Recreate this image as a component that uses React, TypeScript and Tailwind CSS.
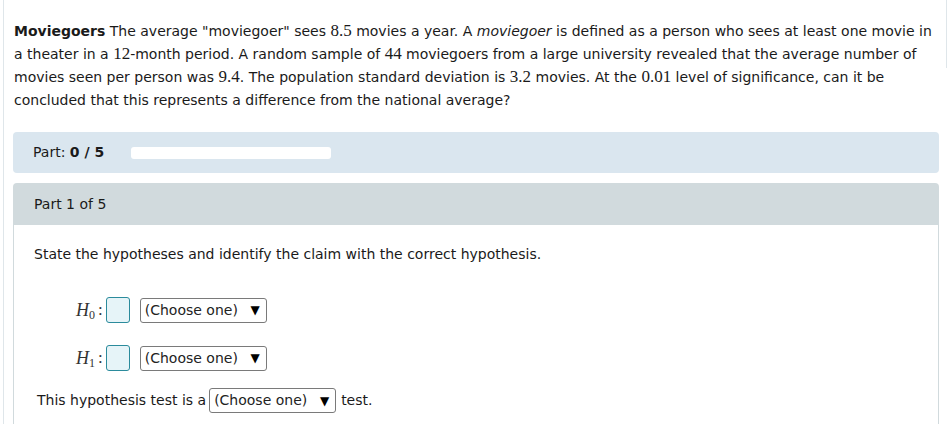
import React from "react";

const font = { fontFamily: "'DejaVu Sans', Verdana, sans-serif" };

function M({ children }: { children: React.ReactNode }) {
  return <span className="font-['Liberation_Serif',serif] text-[17px] leading-none">{children}</span>;
}

function Hyp({ sub }: { sub: string }) {
  return (
    <div className="flex items-center h-[26px]">
      <span className="font-['Liberation_Serif',serif] italic text-[18px] text-[#333]">H</span>
      <span className="font-['Liberation_Serif',serif] text-[12px] text-[#333] mt-[10px]">{sub}</span>
      <span className="font-['Liberation_Serif',serif] text-[17px] text-[#333] ml-[3px] mr-[3px]">:</span>
      <span className="h-[26px] w-[24px] rounded-[3px] border border-[#2b8b9c] bg-[#e6f4f8]" />
      <Select className="ml-[10px]" />
    </div>
  );
}

function Select({ className = "" }: { className?: string }) {
  return (
    <span
      className={`flex h-[25px] w-[127px] items-center justify-between rounded-[3px] border border-[#7a7a7a] bg-white pl-[4px] pr-[6px] text-[14px] text-[#222] ${className}`}
    >
      <span>(Choose one)</span>
      <span className="text-[12px] text-black">▼</span>
    </span>
  );
}

export default function App() {
  return (
    <div className="h-[424px] w-[949px] overflow-hidden bg-white text-[14px] text-[#1a1a1a]" style={font}>
      <div className="relative ml-[3px] mr-[10px] h-full border-l border-[#dfe6ea] pl-[9px]">
        <div className="absolute right-[-8px] top-0 h-[68px] w-px bg-[#dfe6ea]" />
        <p className="pl-px pt-[20px] pr-[2px] leading-[23px]">
          <b>Moviegoers</b> The average "moviegoer" sees <M>8.5</M> movies a year. A <i>moviegoer</i> is defined as a person
          who sees at least one movie in a theater in a <M>12</M>-month period. A random sample of <M>44</M> moviegoers
          from a large university revealed that the average number of movies seen per person was <M>9.4</M>. The
          population standard deviation is <M>3.2</M> movies. At the <M>0.01</M> level of significance, can it be
          concluded that this represents a difference from the national average?
        </p>

        <div className="mt-[20px] flex h-[41px] items-center rounded-[4px] bg-[#dae6ef] pl-[20px]">
          <span>
            Part: <b>0 / 5</b>
          </span>
          <span className="ml-[27px] h-[12px] w-[200px] rounded-[3px] bg-white" />
        </div>

        <div className="mt-[10px] flex h-[42px] items-center rounded-t-[4px] bg-[#d1dadd] pl-[21px]">Part 1 of 5</div>
        <div className="h-[200px] border-x border-[#d1dadd] pl-[20px]">
          <div className="pt-[19px]">State the hypotheses and identify the claim with the correct hypothesis.</div>
          <div className="ml-[42px] mt-[32px] flex flex-col gap-[22px]">
            <Hyp sub="0" />
            <Hyp sub="1" />
          </div>
          <div className="mt-[17px] flex items-center pl-[3px]">
            <span>This hypothesis test is a</span>
            <Select className="ml-[3px]" />
            <span className="ml-[5px]">test.</span>
          </div>
        </div>
      </div>
    </div>
  );
}
